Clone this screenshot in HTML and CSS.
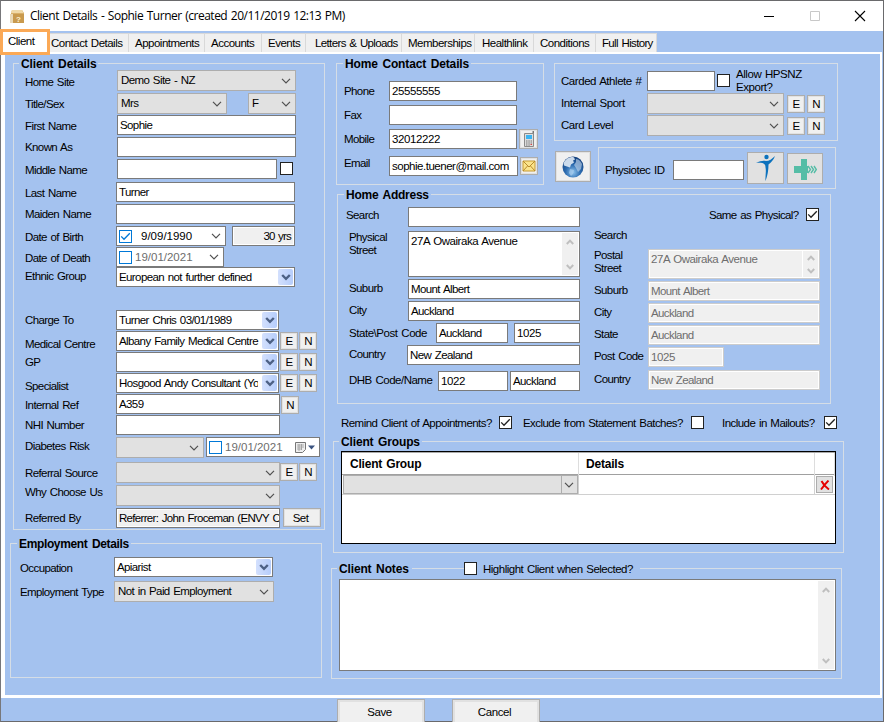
FILE: index.html
```html
<!DOCTYPE html>
<html lang="en">
<head>
<meta charset="utf-8">
<title>Client Details</title>
<link rel="stylesheet" href="styles.css">
</head>
<body>
<svg class="defs" aria-hidden="true">
  <symbol id="chev" viewBox="0 0 10 6"><path d="M1 .8 5 4.8 9 .8" fill="none" stroke="#505050" stroke-width="1.2"/></symbol>
  <symbol id="chevb" viewBox="0 0 10 7"><path d="M1.2 1 5 4.8 8.8 1" fill="none" stroke="#4d6185" stroke-width="2.4"/></symbol>
  <symbol id="sup" viewBox="0 0 8 6"><path d="M.8 5 4 1.6 7.2 5" fill="none" stroke="#bfbfbf" stroke-width="2"/></symbol>
  <symbol id="sdn" viewBox="0 0 8 6"><path d="M.8 1 4 4.4 7.2 1" fill="none" stroke="#bfbfbf" stroke-width="2"/></symbol>
  <symbol id="tick" viewBox="0 0 11 11"><path d="M1.2 5.4 4 8.2 9.8 2.2" fill="none" stroke="currentColor" stroke-width="1.3"/></symbol>
</svg>
<div class="window">
  <header class="titlebar">
    <svg class="app" viewBox="0 0 14 15"><path d="M2 1h10l2 3v10H1V4z" fill="#d9b06a"/><path d="M2 1h10l1.5 3H1z" fill="#f0d9a8"/><path d="M0 5h3v9H0z" fill="#ead9b8"/><path d="M3 5h11v9H3z" fill="#c99a4e"/><text x="6" y="12.5" font-size="8" font-weight="bold" fill="#fff3d6">?</text></svg>
    <h1>Client Details - Sophie Turner (created 20/11/2019 12:13 PM)</h1>
    <div class="winbtns">
      <svg viewBox="0 0 12 12"><path d="M1 6.5h10" stroke="#000"/></svg>
      <svg viewBox="0 0 12 12"><path d="M1.5 1.5h9v9h-9z" stroke="#c8c8c8" fill="none"/></svg>
      <svg viewBox="0 0 12 12"><path d="M1 1l10 10M11 1 1 11" stroke="#000" stroke-width="1.1"/></svg>
    </div>
  </header>
  <nav class="tabs">
    <span class="tab active">Client</span><span class="tab t1">Contact Details</span><span class="tab t2">Appointments</span><span class="tab t3">Accounts</span><span class="tab t4">Events</span><span class="tab t5">Letters &amp; Uploads</span><span class="tab t6">Memberships</span><span class="tab t7">Healthlink</span><span class="tab t8">Conditions</span><span class="tab t9">Full History</span>
  </nav>
  <main class="page">
    <section class="left">
      <div class="group details">
        <h2>Client Details</h2>
        <div class="row h23"><label class="p5 l92">Home Site</label><div class="combo w179">Demo Site - NZ<svg><use href="#chev"/></svg></div></div>
        <div class="row h22"><label class="p4 l92">Title/Sex</label><div class="combo w110">Mrs<svg><use href="#chev"/></svg></div><div class="combo w48 m21">F<svg><use href="#chev"/></svg></div></div>
        <div class="row h22"><label class="p4 l92">First Name</label><div class="box w179">Sophie</div></div>
        <div class="row h22"><label class="p3 l92">Known As</label><div class="box w179"></div></div>
        <div class="row h23"><label class="p4 l92">Middle Name</label><div class="box w160"></div><i class="check m3 d3"></i></div>
        <div class="row h22"><label class="p4">Last Name</label><div class="box w179">Turner</div></div>
        <div class="row h22"><label class="p3">Maiden Name</label><div class="box w179"></div></div>
        <div class="row h21"><label class="p4">Date of Birth</label><div class="box date w110"><i class="check blue"><svg><use href="#tick"/></svg></i><span class="dob">9/09/1990</span><svg class="arr"><use href="#chev"/></svg></div><div class="box ro age w63 m6">30 yrs</div></div>
        <div class="row h20"><label class="p4">Date of Death</label><div class="box date w108"><i class="check blue"></i><span class="dim">19/01/2021</span><svg class="arr"><use href="#chev"/></svg></div></div>
        <div class="row h43"><label class="p2">Ethnic Group</label><div class="box w179 pick">European not further defined<b><svg><use href="#chevb"/></svg></b></div></div>
        <div class="row h21"><label class="p3">Charge To</label><div class="box w163 pick">Turner Chris 03/01/1989<b><svg><use href="#chevb"/></svg></b></div></div>
        <div class="row h21"><label class="p6">Medical Centre</label><div class="box w163 pick">Albany Family Medical Centre<b><svg><use href="#chevb"/></svg></b></div><span class="btn m1 d1">E</span><span class="btn m1 d1">N</span></div>
        <div class="row h21"><label class="p3">GP</label><div class="box w163 pick"><b><svg><use href="#chevb"/></svg></b></div><span class="btn m1 d1">E</span><span class="btn m1 d1">N</span></div>
        <div class="row h21"><label class="p6">Specialist</label><div class="box w163 pick"><span class="clip">Hosgood Andy Consultant (Yo</span><b><svg><use href="#chevb"/></svg></b></div><span class="btn m1 d1">E</span><span class="btn m1 d1">N</span></div>
        <div class="row h21"><label class="p4">Internal Ref</label><div class="box w164">A359</div><span class="btn m1 d2">N</span></div>
        <div class="row h22"><label class="p3">NHI Number</label><div class="box w164"></div></div>
        <div class="row h25"><label class="p2">Diabetes Risk</label><div class="combo w88"><svg><use href="#chev"/></svg></div><div class="box date w114 m2"><i class="check blue"></i><span class="dim">19/01/2021</span><svg class="cal" viewBox="0 0 22 13"><path d="M1.5 1.5h10v7l-3 3h-7z" fill="#eee" stroke="#777"/><path d="M3 4h7M3 6h7M3 8h5M5 3v7M7.500 3v6" stroke="#999" stroke-width=".8"/><path d="M14 4.500h7l-3.500 4z" fill="#3b5380"/></svg></div></div>
        <div class="row h23"><label class="p4">Referral Source</label><div class="combo w164"><svg><use href="#chev"/></svg></div><span class="btn d1">E</span><span class="btn m1 d1">N</span></div>
        <div class="row h23"><label class="p0">Why Choose Us</label><div class="combo w164"><svg><use href="#chev"/></svg></div></div>
        <div class="row h20"><label class="p3">Referred By</label><div class="box ro w164"><span class="clip long">Referrer: John Froceman (ENVY C</span></div><span class="btn set m3">Set</span></div>
      </div>
      <div class="group employment">
        <h2>Employment Details</h2>
        <div class="row h24"><label class="p4">Occupation</label><div class="box w159 pick">Apiarist<b><svg><use href="#chevb"/></svg></b></div></div>
        <div class="row h22"><label class="p4">Employment Type</label><div class="combo w160">Not in Paid Employment<svg><use href="#chev"/></svg></div></div>
      </div>
    </section>
    <section class="right">
      <div class="top">
        <div class="group contact">
          <h2>Home Contact Details</h2>
          <div class="row h24"><label class="p3">Phone</label><div class="box num w128">25555555</div></div>
          <div class="row h24"><label class="p3">Fax</label><div class="box w128"></div></div>
          <div class="row h27"><label class="p3">Mobile</label><div class="box num w128">32012222</div><span class="btn icon m2"><svg viewBox="0 0 12 16"><path d="M9.500 0h1.500v5H9.500z" fill="#777"/><path d="M1.500 2.500h9v13h-9z" fill="#ddd" stroke="#8a8a8a"/><path d="M3 4h6v4H3z" fill="#3bb4f2"/><path d="M3 10h1.500M5.300 10h1.500M7.600 10H9M3 12h1.500M5.300 12h1.500M7.600 12H9M3 14h1.500M5.300 14h1.500" stroke="#777"/><path d="M7.500 13.500H9" stroke="#d44"/></svg></span></div>
          <div class="row h20"><label class="p0">Email</label><div class="box mailbox w129">sophie.tuener@mail.com</div><span class="btn icon mail m2 d1"><svg viewBox="0 0 14 12"><path d="M1 1h12v10H1z" fill="#fbe48c" stroke="#c79a32"/><path d="M1 1l6 6 6-6M1 11l4.500-5M13 11 8.500 6" fill="none" stroke="#b98b2c"/></svg></span></div>
        </div>
        <div class="side">
          <div class="group carded">
            <div class="row h22"><label class="p3">Carded Athlete #</label><div class="box w68"></div><i class="check m2 d3"></i><label class="hps">Allow HPSNZ<br>Export?</label></div>
            <div class="row h22"><label class="p3">Internal Sport</label><div class="combo w137"><svg><use href="#chev"/></svg></div><span class="btn m3 d2">E</span><span class="btn m2 d2">N</span></div>
            <div class="row h22"><label class="p3">Card Level</label><div class="combo w137"><svg><use href="#chev"/></svg></div><span class="btn m3 d2">E</span><span class="btn m2 d2">N</span></div>
          </div>
          <div class="row physio-row">
            <span class="btn globe"><svg viewBox="0 0 22 22"><defs><radialGradient id="gl" cx=".5" cy=".75" r=".7"><stop offset="0" stop-color="#8fc4ee"/><stop offset=".5" stop-color="#2d6cb0"/><stop offset="1" stop-color="#15427f"/></radialGradient></defs><circle cx="11" cy="11" r="10.500" fill="url(#gl)"/><path d="M1.500 7C4 2 9 0 12 1.500l1 2-2 1 1 2-3 2-1 3-3-1-3-1z" fill="#dfeaf5" opacity=".9"/><path d="M14 3c3 0 5 3 6 5l-1 5-3 3-2-4-2-3 2-3z" fill="#c9dcf0" opacity=".6"/><path d="M8 13l4 1-1 4-2 2-2-3z" fill="#a9cdee" opacity=".7"/></svg></span>
            <div class="group physio row"><label class="p9">Physiotec ID</label><div class="box w71"></div><span class="btn man m3"><svg viewBox="0 0 22 28"><circle cx="11.500" cy="3" r="2.200" fill="#0c72bd"/><path d="M1 9c4-2 7-2.500 10-2 3 0 6-2 9-5-1.500 4-3.500 6-6.500 8.500 0 6-1 11-3 16.500-.5-4 1-9 0-13.500 0-3-1-5.500-9.500-4.500z" fill="#0c72bd"/></svg></span><span class="btn cross m3 d1"><svg viewBox="0 0 24 22"><path d="M8 1h6v21H8v-7H1V8h7zM14 8h1v7h-1z" fill="#55bda6"/><path d="M15 8l2.500 3.500L15 15M18 8l2.500 3.500L18 15M21 8l2.300 3.500L21 15" fill="none" stroke="#55bda6" stroke-width="1.400"/></svg></span></div>
          </div>
        </div>
      </div>
      <div class="group address">
        <h2>Home Address</h2>
        <div class="cols">
          <div class="physical">
            <div class="row h24 out"><label class="p1">Search</label><div class="box w172"></div></div>
            <div class="row h48"><label class="p0">Physical<br>Street</label><div class="box area w172">27A Owairaka Avenue<span class="scroll"><svg><use href="#sup"/></svg><svg><use href="#sdn"/></svg></span></div></div>
            <div class="row h22"><label class="p2">Suburb</label><div class="box w172">Mount Albert</div></div>
            <div class="row h22"><label class="p2">City</label><div class="box w172">Auckland</div></div>
            <div class="row h22"><label class="p3 l87">State\Post Code</label><div class="box w72">Auckland</div><div class="box num w66 m6">1025</div></div>
            <div class="row h26"><label class="p2 l58">Country</label><div class="box w173">New Zealand</div></div>
            <div class="row h20"><label class="p2 l89">DHB Code/Name</label><div class="box num w70">1022</div><div class="box w70 m2">Auckland</div></div>
          </div>
          <div class="postal">
            <div class="row same"><label>Same as Physical?</label><i class="check"><svg><use href="#tick"/></svg></i></div>
            <div class="row h21"><label>Search</label></div>
            <div class="row h32"><label class="p0">Postal<br>Street</label><div class="box off area w172">27A Owairaka Avenue<span class="scroll"><svg><use href="#sup"/></svg><svg><use href="#sdn"/></svg></span></div></div>
            <div class="row h22"><label class="p2">Suburb</label><div class="box off w172">Mount Albert</div></div>
            <div class="row h22"><label class="p2">City</label><div class="box off w172">Auckland</div></div>
            <div class="row h22"><label class="p2">State</label><div class="box off w172">Auckland</div></div>
            <div class="row h23"><label class="p2">Post Code</label><div class="box num off w76">1025</div></div>
            <div class="row h20"><label class="p2">Country</label><div class="box off w172">New Zealand</div></div>
          </div>
        </div>
      </div>
      <div class="options">
        <label class="o1">Remind Client of Appointments?</label><i class="check"><svg><use href="#tick"/></svg></i>
        <label class="o2">Exclude from Statement Batches?</label><i class="check"></i>
        <label class="o3">Include in Mailouts?</label><i class="check"><svg><use href="#tick"/></svg></i>
      </div>
      <div class="group groups">
        <h2>Client Groups</h2>
        <div class="table">
          <div class="thead"><span>Client Group</span><span>Details</span><span></span></div>
          <div class="trow"><div class="cell"><div class="combo split"><svg><use href="#chev"/></svg></div></div><div class="cell"></div><div class="cell"><span class="btn del"><svg viewBox="0 0 10 10"><path d="M1.500 1Q4 6 9 9.500M8.500 .5Q5 4 1 9.500" fill="none" stroke="#e60000" stroke-width="1.900"/></svg></span></div></div>
        </div>
      </div>
      <div class="group notes">
        <div class="notehead"><h2>Client Notes</h2><i class="check"></i><label>Highlight Client when Selected?</label></div>
        <div class="box area note"><span class="scroll"><svg><use href="#sup"/></svg><svg><use href="#sdn"/></svg></span></div>
      </div>
    </section>
  </main>
  <footer><span class="btn big">Save</span><span class="btn big">Cancel</span></footer>
</div>
</body>
</html>
```
FILE: styles.css
```css
* { box-sizing: border-box; }
body { margin: 0; width: 884px; height: 722px; overflow: hidden; font: 11.5px/14px "Liberation Sans", Arial, sans-serif; letter-spacing: -.6px; word-spacing: 1px; color: #000; }
.defs { position: absolute; width: 0; height: 0; }
i { font-style: normal; }
.window { width: 884px; height: 722px; background: #a4c2ef; border: 1px solid #6a6a6c; border-left-color: #77777a; display: flex; flex-direction: column; }

.titlebar { height: 30px; flex: none; background: #fff; display: flex; align-items: center; padding-left: 9px; }
.app { width: 14px; height: 15px; margin-right: 6px; }
h1 { margin: 0; font: 12px/16px "Open Sans", sans-serif; letter-spacing: -.5px; word-spacing: 1px; width: 500px; white-space: nowrap; }
.winbtns { margin-left: auto; display: flex; gap: 33.500px; padding-right: 17px; }
.winbtns svg { width: 12px; height: 12px; }

.tabs { height: 21px; flex: none; display: flex; align-items: flex-end; letter-spacing: -.5px; }
.tab { height: 19px; background: #f0f0f0; border: 1px solid #d9d9d9; border-width: 1px 1px 0 0; line-height: 19px; padding-left: 6px; white-space: nowrap; overflow: hidden; }
.tab.active { width: 50px; height: 26px; margin: 0 0 -3px -1px; background: #fff; border: 3px solid #fba956; line-height: 18px; padding-left: 5px; z-index: 1; flex: none; letter-spacing: -.5px; }
.tab.t1 { width: 79px; padding-left: 1px; letter-spacing: -.5px; } .t2 { width: 76px; } .t3 { width: 57px; } .t4 { width: 44px; } .tab.t5 { width: 96px; padding-left: 9px; letter-spacing: -.63px; }
.t6 { width: 73px; } .tab.t7 { width: 59px; padding-left: 7px; } .t8 { width: 62px; } .tab.t9 { width: 61px; letter-spacing: -.65px; }

.page { height: 646px; flex: none; display: flex; border: solid #fff; border-width: 2px 2px 3px 4px; margin-right: 1px; }
.left { width: 326px; padding-top: 9px; flex: none; }
.right { flex: none; width: 540px; padding-top: 9px; }

.group { border: 1px solid #d5dde6; }
h2 { margin: -7px 0 0 5px; padding: 0 2px; width: fit-content; background: #a4c2ef; font: bold 12px/14px "Liberation Sans", sans-serif; letter-spacing: -.15px; word-spacing: 1.5px; height: 13px; white-space: nowrap; }
.row { display: flex; align-items: flex-start; }
label { flex: none; white-space: nowrap; }
.details { width: 312px; height: 467px; margin-left: 8px; }
.details label { width: 91px; }
.details .row { padding-left: 11px; }
.details label.l92 { width: 92px; }
.employment { width: 312px; height: 135px; margin: 13px 0 0 5px; }
.employment h2 { margin-left: 6px; letter-spacing: -.36px; }
.employment .row { padding-left: 9px; }
.employment h2 + .row { margin-top: 7px; }
.employment label { width: 94px; }

.box { height: 20px; flex: none; background: #fff; border: 1px solid #7a7a7a; padding: 0 0 0 2px; line-height: 18px; white-space: nowrap; overflow: hidden; }
.num { letter-spacing: -.4px; }
.mailbox { letter-spacing: -.48px; }
.combo { height: 21px; flex: none; background: #e1e1e1; border: 1px solid #adadad; padding-left: 3px; line-height: 19px; display: flex; justify-content: space-between; align-items: center; white-space: nowrap; }
.combo svg, .arr { width: 10px; height: 6px; margin: 0 4px 0 auto; }
.ro, .off { background: #f0f0f0; }
.ro { box-shadow: inset 0 0 0 1px #fff; }
.age { text-align: right; padding-right: 3px; letter-spacing: -.8px; }
.off { border-color: #ccc; box-shadow: inset 0 0 0 1px #fff; color: #6d6d6d; }
.pick { display: flex; justify-content: space-between; }
.pick b { width: 15px; height: 16px; margin: 1px 1px 0 auto; flex: none; background: linear-gradient(90deg, #d3e0fd, #b6cdfb); border-radius: 2px; display: flex; align-items: center; justify-content: center; }
.pick b svg { width: 10px; height: 7px; }
.clip { width: 139px; overflow: hidden; }
.clip.long { width: 160px; display: block; letter-spacing: -.68px; }
.date { display: flex; align-items: center; }
.date .check { margin-right: 3px; }
.dob { padding-left: 6px; letter-spacing: 0; }
.dim { color: #6d6d6d; letter-spacing: 0; }
.cal { width: 22px; height: 13px; margin: 0 3px 0 auto; }
.check { display: block; flex: none; width: 13px; height: 13px; background: #fff; border: 1px solid #222; color: #222; }
.check svg { display: block; width: 11px; height: 11px; }
.check.blue { border-color: #0078d7; color: #0078d7; }
.btn { flex: none; width: 18px; height: 18px; background: #f0f0f0; border: 1px solid #adadad; box-shadow: inset 0 0 0 1px #e1e1e1; display: flex; align-items: center; justify-content: center; }
.set { width: 38px; height: 19px; padding-right: 3px; }

.top { display: flex; height: 131px; margin-left: 5px; }
.contact { width: 208px; height: 122px; }
.contact h2 { margin-left: 6px; }
.contact .row { padding-left: 7px; }
.contact h2 + .row { margin-top: 11px; }
.contact label { width: 45px; }
.icon { width: 19px; height: 20px; }
.icon svg { width: 12px; height: 16px; }
.icon.mail { width: 18px; height: 18px; }
.mail svg { width: 14px; height: 12px; }
.side { margin-left: 10px; }
.carded { width: 284px; height: 78px; padding: 7px 0 0 6px; }
.carded label { width: 86px; letter-spacing: -.45px; }
.carded label.hps { width: 80px; margin: -3px 0 0 6px; line-height: 13px; }
.physio-row { margin-top: 6px; }
.globe { width: 36px; height: 31px; margin: 4px 7px 0 1px; }
.globe svg { width: 22px; height: 22px; }
.physio { width: 238px; height: 42px; padding: 4px 0 0 6px; }
.physio label { width: 68px; padding-top: 11px; letter-spacing: -.5px; }
.physio .box { margin-top: 8px; }
.man { width: 37px; height: 32px; } .man svg { width: 22px; height: 28px; }
.cross { width: 36px; height: 31px; } .cross svg { width: 24px; height: 22px; }
.man, .cross { background: #e1e1e1; }

.address { width: 494px; height: 210px; margin-left: 6px; }
.address h2 { margin-left: 6px; letter-spacing: -.25px; }
.cols { display: flex; }
.physical { width: 245px; padding: 6px 0 0 11px; }
.physical label { width: 59px; }
.physical .out { margin-left: -3px; }
.physical .out label { width: 62px; }
.physical label.l87 { width: 87px; letter-spacing: -.45px; } .physical label.l58 { width: 58px; } .physical label.l89 { width: 89px; letter-spacing: -.5px; }
.area { position: relative; height: 46px; letter-spacing: -.45px; }
.off.area { height: 30px; }
.address .h48 label, .address .h32 label { line-height: 13px; }
.scroll { position: absolute; right: 1px; top: 1px; bottom: 1px; width: 16px; background: #f0f0f0; display: flex; flex-direction: column; justify-content: space-between; align-items: center; padding: 6px 0 5px; }
.off .scroll { border-left: 1px solid #fff; padding: 4px 0 3px; }
.scroll svg { width: 8px; height: 6px; }
.postal { padding-left: 11px; }
.postal label { width: 54px; }
.postal .same { height: 27px; padding: 7px 0 0 115px; }
.postal .same label { width: 97px; letter-spacing: -.6px; }

.options { display: flex; height: 37px; padding: 12px 0 0 10px; letter-spacing: -.55px; }
.o1 { width: 158px; } .o2 { width: 168px; margin-left: 11px; } .o3 { width: 102px; margin-left: 18px; }

.groups { width: 511px; height: 112px; margin-left: 2px; }
.table { width: 495px; height: 93px; margin: 3px 0 0 7px; border: 1px solid #000; background: #fff; }
.thead, .trow { display: grid; grid-template-columns: 237px 236px 1fr; }
.thead { height: 23px; border-bottom: 1px solid #a0a0a0; border-top: 1px solid #aaa; font: bold 12px/23px "Liberation Sans", sans-serif; letter-spacing: -.2px; }
.thead span { padding-left: 8px; border-right: 1px solid #ddd; }
.thead span + span { padding-left: 7px; }
.trow { height: 20px; border-bottom: 1px solid #d0d0d0; }
.cell { border-right: 1px solid #d0d0d0; }
.cell:last-child { padding-left: 1px; border-right: 0; }
.split { width: 235px; height: 19px; margin-left: 1px; background: linear-gradient(90deg, #e1e1e1 217px, #adadad 217px, #adadad 218px, #e1e1e1 218px); }
.split svg { margin-right: 3px; }
.del { width: 17px; height: 17px; margin-top: 1px; background: #e1e1e1; }
.del svg { width: 10px; height: 10px; }

.notes { width: 511px; height: 111px; margin-top: 15px; }
.notehead { display: flex; height: 10px; }
.notehead h2 { margin: -7px 0 0 5px; width: 75px; }
.notehead .check { margin: -7px 0 0 52px; }
.notehead label { margin-top: -7px; padding: 0 7px 0 6px; background: #a4c2ef; height: 14px; letter-spacing: -.5px; }
.note { width: 497px; height: 92px; margin-left: 7px; }

footer { display: flex; gap: 27px; padding: 1px 0 0 336px; height: 23px; letter-spacing: -.4px; }
.big { width: 88px; height: 26px; box-shadow: inset 0 0 0 2px #e1e1e1; padding: 0 3px 1px 0; }

.p0 { padding-top: 0; } .p1 { padding-top: 1px; } .p2 { padding-top: 2px; } .p3 { padding-top: 3px; } .p4 { padding-top: 4px; } .p5 { padding-top: 5px; } .p6 { padding-top: 6px; }
.h20 { height: 20px; } .h21 { height: 21px; } .h22 { height: 22px; } .h23 { height: 23px; } .h24 { height: 24px; } .h25 { height: 25px; } .h26 { height: 26px; } .h27 { height: 27px; } .h32 { height: 32px; } .h43 { height: 43px; } .h48 { height: 48px; }
.m1 { margin-left: 1px; } .m2 { margin-left: 2px; } .m3 { margin-left: 3px; } .m6 { margin-left: 6px; } .m21 { margin-left: 21px; }
.d1 { margin-top: 1px; } .d2 { margin-top: 2px; } .d3 { margin-top: 3px; }
.w48 { width: 48px; } .w63 { width: 63px; } .w66 { width: 66px; } .w68 { width: 68px; } .w70 { width: 70px; } .w71 { width: 71px; } .w72 { width: 72px; } .w76 { width: 76px; } .w88 { width: 88px; }
.w108 { width: 108px; } .w110 { width: 110px; } .w114 { width: 114px; } .w128 { width: 128px; } .w129 { width: 129px; } .w137 { width: 137px; } .w159 { width: 159px; } .w160 { width: 160px; } .w163 { width: 163px; } .w164 { width: 164px; } .w172 { width: 172px; } .w173 { width: 173px; } .w179 { width: 179px; }
```
